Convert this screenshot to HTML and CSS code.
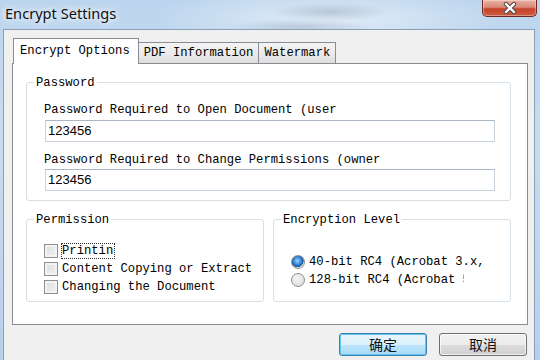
FILE: index.html
```html
<!DOCTYPE html>
<html lang="en">
<head>
    <meta charset="UTF-8">
    <title>Encrypt Settings</title>
    <link rel="stylesheet" href="styles.css">
</head>
<body>

    <div class="window">
        <div class="titlebar">
            <span class="title">Encrypt Settings</span>
            <div class="close-btn">
                <svg width="16" height="12" viewBox="0 0 16 12">
                    <path d="M4 2 L12 10 M12 2 L4 10" stroke="#4a4a4a" stroke-width="4.4" stroke-linecap="round"/>
                    <path d="M4 2 L12 10 M12 2 L4 10" stroke="#ffffff" stroke-width="2.4" stroke-linecap="round"/>
                </svg>
            </div>
        </div>

        <div class="client">
            <div class="tabs">
                <div class="tab active">Encrypt Options</div>
                <div class="tab">PDF Information</div>
                <div class="tab">Watermark</div>
            </div>

            <div class="panel">
                <div class="group password-group">
                    <div class="group-title">Password</div>
                    <div class="field-label first">Password Required to Open Document (user</div>
                    <div class="textbox">123456</div>
                    <div class="field-label second">Password Required to Change Permissions (owner</div>
                    <div class="textbox last">123456</div>
                </div>

                <div class="group-row">
                    <div class="group">
                        <div class="group-title">Permission</div>
                        <div class="option-list check-list">
                            <div class="option">
                                <span class="checkbox"></span>
                                <span class="option-text focused" style="width: 52px">Printing</span>
                            </div>
                            <div class="option">
                                <span class="checkbox"></span>
                                <span class="option-text" style="width: 191px">Content Copying or Extraction</span>
                            </div>
                            <div class="option">
                                <span class="checkbox"></span>
                                <span class="option-text">Changing the Document</span>
                            </div>
                        </div>
                    </div>

                    <div class="group">
                        <div class="group-title">Encryption Level</div>
                        <div class="option-list radio-list">
                            <div class="option">
                                <span class="radio checked"></span>
                                <span class="option-text" style="width: 183px">40-bit RC4 (Acrobat 3.x, 4.x)</span>
                            </div>
                            <div class="option">
                                <span class="radio"></span>
                                <span class="option-text" style="width: 155px">128-bit RC4 (Acrobat 5.x)</span>
                            </div>
                        </div>
                    </div>
                </div>
            </div>

            <div class="buttons">
                <button class="btn default">确定</button>
                <button class="btn">取消</button>
            </div>
        </div>
    </div>

</body>
</html>
```

FILE: styles.css
```css
body {
    margin: 0;
    width: 540px;
    height: 360px;
    overflow: hidden;
    font-family: "Liberation Mono", monospace;
}
.window {
    height: 360px;
    background:
        radial-gradient(ellipse 60px 10px at 330px 12px, rgba(120,140,160,0.35), transparent),
        radial-gradient(ellipse 70px 8px at 300px 27px, rgba(120,140,160,0.3), transparent),
        radial-gradient(ellipse 180px 30px at 330px 18px, rgba(255,255,255,0.55), transparent),
        linear-gradient(180deg, #bcd5ee 0%, #c7dcf0 40%, #b7d0ea 100%);
}
.titlebar {
    height: 29px;
    display: flex;
    justify-content: space-between;
    align-items: flex-start;
}
.title {
    font-family: "Noto Sans", sans-serif;
    font-size: 14.6px;
    line-height: 16px;
    margin: 5px 0 0 5px;
    color: #111;
    text-shadow: 0 0 6px #ffffff, 0 0 10px #ffffff;
}
.close-btn {
    width: 55px;
    height: 17px;
    margin-right: 3px;
    box-sizing: border-box;
    border: 1px solid #6e2a20;
    border-top: none;
    border-radius: 0 0 5px 5px;
    background: linear-gradient(180deg, #eab0a2 0%, #d98a78 45%, #c4432b 55%, #cf5b3f 100%);
    box-shadow: inset 0 0 0 1px rgba(255,255,255,0.35);
    display: flex;
    align-items: center;
    justify-content: center;
}
.client {
    margin: 0 5px 0 3px;
    height: 331px;
    box-sizing: border-box;
    background-color: #f0f0f0;
    border: 1px solid #8aa0b8;
    border-bottom: none;
    padding: 8px 6px 0 8px;
}
.tabs {
    display: flex;
    align-items: flex-end;
    height: 25px;
    padding-left: 1px;
    font-size: 12.2px;
}
.tab {
    height: 21px;
    line-height: 21px;
    padding: 0 5px;
    border: 1px solid #898c95;
    border-bottom: none;
    margin-left: -1px;
    background: linear-gradient(180deg, #f3f3f3 0%, #ebebeb 50%, #dddddd 100%);
    box-sizing: border-box;
}
.tab.active {
    height: 26px;
    line-height: 25px;
    margin-left: 0;
    margin-bottom: -1px;
    padding: 0 8px 0 6px;
    background: #ffffff;
    position: relative;
    z-index: 1;
}
.panel {
    height: 262px;
    box-sizing: border-box;
    background-color: #ffffff;
    border: 1px solid #898c95;
    padding: 18px 16px 0 13px;
}
.group {
    border: 1px solid #d5dfe5;
    border-radius: 3px;
    font-size: 12.2px;
    color: #000;
}
.group-title {
    width: fit-content;
    margin: -7px 0 0 7px;
    padding: 0 2px;
    line-height: 14px;
    background-color: #ffffff;
}
.password-group {
    padding: 0 15px 9px 0;
}
.field-label {
    line-height: 14px;
    margin-left: 17px;
}
.field-label.first {
    margin-top: 13px;
}
.field-label.second {
    margin-top: 11px;
}
.textbox {
    height: 22px;
    box-sizing: border-box;
    margin: 3px 0 0 18px;
    border: 1px solid #c8d2dc;
    border-top-color: #abb6c2;
    padding-left: 2px;
    font-family: "Liberation Sans", sans-serif;
    font-size: 13px;
    line-height: 20px;
}
.textbox.last {
    margin-top: 2px;
}
.group-row {
    display: flex;
    gap: 9px;
    margin-top: 18px;
}
.group-row .group {
    width: 238px;
    box-sizing: border-box;
    padding-bottom: 5px;
}
.check-list {
    margin: 15px 0 0 17px;
}
.radio-list {
    margin: 26px 0 0 17px;
}
.option {
    height: 18px;
    display: flex;
    align-items: center;
    gap: 4px;
}
.option-text {
    display: inline-block;
    white-space: nowrap;
    overflow: hidden;
    line-height: 14px;
}
.option-text.focused {
    outline: 1px dotted #333;
    outline-offset: 0;
}
.checkbox {
    width: 14px;
    height: 14px;
    box-sizing: border-box;
    border: 1px solid #8f8f8f;
    background: linear-gradient(135deg, #dcdcdc 0%, #f2f2f2 100%);
    box-shadow: inset 0 0 0 2px #f4f4f4;
    flex-shrink: 0;
}
.radio {
    width: 14px;
    height: 14px;
    box-sizing: border-box;
    border-radius: 50%;
    border: 1px solid #8f8f8f;
    background: radial-gradient(circle at 40% 35%, #f6f6f6 0%, #d6d6d6 100%);
    flex-shrink: 0;
}
.radio.checked {
    background:
        radial-gradient(circle at 45% 40%, #9fd3ff 0%, #2a7bd0 45%, #1b4f9a 62%, transparent 65%),
        radial-gradient(circle at 40% 35%, #f6f6f6 0%, #d6d6d6 100%);
}
.buttons {
    display: flex;
    justify-content: flex-end;
    gap: 12px;
    margin-top: 8px;
    padding-right: 1px;
}
.btn {
    width: 88px;
    height: 23px;
    box-sizing: border-box;
    border: 1px solid #707070;
    border-radius: 3px;
    background: linear-gradient(180deg, #f2f2f2 0%, #ebebeb 50%, #dddddd 51%, #cfcfcf 100%);
    box-shadow: inset 0 0 0 1px rgba(255,255,255,0.7);
    font-family: "Noto Sans CJK SC", sans-serif;
    font-size: 14px;
    line-height: 19px;
    color: #111;
    padding: 0;
}
.btn.default {
    border-color: #3c7fb1;
    background: linear-gradient(180deg, #eaf6fd 0%, #d9f0fc 50%, #bee6fd 51%, #a7d9f5 100%);
    box-shadow: inset 0 0 0 1px #62c7f0;
}
```
